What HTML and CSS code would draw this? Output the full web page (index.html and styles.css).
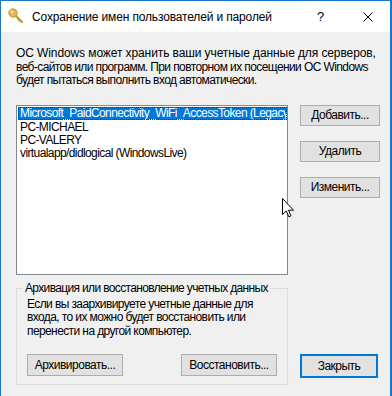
FILE: index.html
```html
<!DOCTYPE html>
<html lang="ru">
<head>
<meta charset="utf-8">
<title>Сохранение имен пользователей и паролей</title>
<link rel="stylesheet" href="styles.css">
</head>
<body>
<div class="window">
  <div class="titlebar">
    <svg class="key" width="16" height="16" viewBox="0 0 16 16">
      <path d="M6.5 6.5 L14 14" stroke="#c89b2c" stroke-width="2.4" stroke-linecap="round"/>
      <path d="M11 11 L9.6 12.4 M12.6 12.6 L11.4 13.8" stroke="#c89b2c" stroke-width="1.6"/>
      <circle cx="5" cy="5" r="4.2" fill="#e6b94a" stroke="#b8892a" stroke-width="0.8"/>
      <circle cx="4" cy="4" r="1.3" fill="#fff3c8"/>
    </svg>
    <span class="title">Сохранение имен пользователей и паролей</span>
    <span class="help">?</span>
    <svg class="close-x" width="10" height="10" viewBox="0 0 10 10">
      <path d="M0.5 0.5 L9.5 9.5 M9.5 0.5 L0.5 9.5" stroke="#000" stroke-width="1"/>
    </svg>
  </div>
  <div class="content">
    <p class="desc"><span class="ln ln-a">ОС Windows может хранить ваши учетные данные для серверов,</span><span class="ln ln-b">веб-сайтов или программ. При повторном их посещении ОС Windows</span><span class="ln ln-b">будет пытаться выполнить вход автоматически.</span></p>
    <div class="main">
      <div class="listbox">
        <div class="item selected">Microsoft_PaidConnectivity_WiFi_AccessToken (Legacy)</div>
        <div class="item">PC-MICHAEL</div>
        <div class="item">PC-VALERY</div>
        <div class="item">virtualapp/didlogical (WindowsLive)</div>
      </div>
      <div class="side">
        <button class="btn">Добавить...</button>
        <button class="btn">Удалить</button>
        <button class="btn">Изменить...</button>
      </div>
    </div>
    <div class="bottom">
      <fieldset class="group">
        <legend>Архивация или восстановление учетных данных</legend>
        <p class="group-text"><span class="ln">Если вы заархивируете учетные данные для</span><span class="ln">входа, то их можно будет восстановить или</span><span class="ln">перенести на другой компьютер.</span></p>
        <div class="group-buttons">
          <button class="btn wide">Архивировать...</button>
          <button class="btn wide">Восстановить...</button>
        </div>
      </fieldset>
      <button class="btn default">Закрыть</button>
    </div>
  </div>
  <svg class="cursor" width="13" height="20" viewBox="0 0 13 20">
    <path d="M0.5 0.5 L0.5 16.5 L4.3 12.9 L6.8 18.8 L8.9 17.9 L6.5 12.2 L11.5 12.2 Z" fill="#fff" stroke="#000" stroke-width="1" stroke-linejoin="miter"/>
  </svg>
</div>
</body>
</html>
```
FILE: styles.css
```css
* { box-sizing: border-box; }
html, body { margin: 0; padding: 0; }
body {
  width: 392px;
  height: 396px;
  background: #4a6a8e;
  font-family: "Liberation Sans", Arial, sans-serif;
  font-size: 12px;
  color: #000;
  overflow: hidden;
}
.window {
  position: relative;
  width: 391px;
  height: 396px;
  border: 1px solid #1a76c9;
  border-bottom: none;
  background: #f0f0f0;
}
.titlebar {
  height: 31px;
  background: #fff;
  display: flex;
  align-items: center;
  padding-left: 7px;
}
.key { flex: none; margin-right: 8px; margin-top: -1px; }
.title { flex: 1; font-size: 12px; letter-spacing: -0.15px; white-space: nowrap; }
.help { width: 10px; margin-right: 36px; font-size: 13px; }
.close-x { flex: none; margin-right: 17px; }
.content {
  padding: 15px 12px 0 15px;
}
.desc {
  margin: 0;
  line-height: 13.5px;
}
.ln { display: block; white-space: nowrap; letter-spacing: -0.6px; }
.ln-a { letter-spacing: -0.1px; }
.ln-b { letter-spacing: -0.6px; }
.main {
  display: flex;
  margin-top: 17px;
}
.listbox {
  flex: none;
  width: 272px;
  height: 170px;
  background: #fff;
  border: 1px solid #828790;
  padding: 1px 0 0 1px;
  overflow: hidden;
}
.item {
  height: 13px;
  line-height: 13px;
  padding-left: 2px;
  white-space: nowrap;
  overflow: hidden;
  letter-spacing: -0.6px;
}
.item.selected {
  background: #0078d7;
  color: #fff;
  margin-bottom: 1px;
  outline: 1px dotted #1a3a66;
  outline-offset: -1px;
}
.side {
  display: flex;
  flex-direction: column;
  gap: 15px;
  margin-left: 12px;
}
.btn {
  font-family: inherit;
  font-size: 12px;
  letter-spacing: -0.5px;
  color: #000;
  background: #e1e1e1;
  border: 1px solid #adadad;
  width: 80px;
  height: 21px;
  padding: 0;
  line-height: 18px;
}
.bottom {
  display: flex;
  align-items: flex-end;
  margin-top: 7px;
}
.group {
  flex: none;
  margin: 0;
  min-width: 0;
  width: 272px;
  height: 103px;
  border: 1px solid #dcdcdc;
  padding: 0 10px;
}
.group legend {
  padding: 0 2px;
  margin-left: -4px;
  line-height: 13px;
  white-space: nowrap;
  letter-spacing: -0.65px;
}
.group-text {
  margin: 3px 0 0;
  line-height: 13.5px;
}
.group-buttons {
  display: flex;
  justify-content: space-between;
  margin-top: 16px;
}
.btn.wide { width: 96px; height: 22px; }
.btn.default {
  margin-left: 12px;
  margin-bottom: 7px;
  width: 79px;
  height: 24px;
  border: 2px solid #0078d7;
}
.cursor {
  position: absolute;
  left: 281px;
  top: 197px;
}
```
